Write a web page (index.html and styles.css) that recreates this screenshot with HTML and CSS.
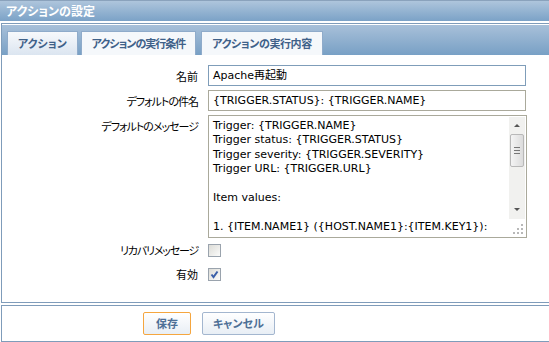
FILE: index.html
```html
<!DOCTYPE html>
<html>
<head>
<meta charset="utf-8">
<link rel="stylesheet" href="styles.css">
</head>
<body>
<div class="header">アクションの設定</div>
<div class="panel">
  <div class="tabbar">
    <div class="tab active">アクション</div>
    <div class="tab long">アクションの実行条件</div>
    <div class="tab long last">アクションの実行内容</div>
  </div>
  <div class="form">
    <div class="row">
      <div class="label">名前</div>
      <div class="input blue">Apache再起動</div>
    </div>
    <div class="row">
      <div class="label narrow">デフォルトの件名</div>
      <div class="input">{TRIGGER.STATUS}: {TRIGGER.NAME}</div>
    </div>
    <div class="row top">
      <div class="label narrow">デフォルトのメッセージ</div>
      <div class="textarea">
        <div class="ta-text">Trigger: {TRIGGER.NAME}<br>Trigger status: {TRIGGER.STATUS}<br>Trigger severity: {TRIGGER.SEVERITY}<br>Trigger URL: {TRIGGER.URL}<br><br>Item values:<br><br>1. {ITEM.NAME1} ({HOST.NAME1}:{ITEM.KEY1}):</div>
        <div class="scroll">
          <div class="arrow up"></div>
          <div class="track">
            <div class="thumb"><span></span><span></span><span></span></div>
          </div>
          <div class="arrow down"></div>
          <div class="grip">
            <svg width="11" height="11" viewBox="0 0 11 11"><g fill="#b8b8b8"><rect x="8" y="0" width="2" height="2"/><rect x="4" y="4" width="2" height="2"/><rect x="8" y="4" width="2" height="2"/><rect x="0" y="8" width="2" height="2"/><rect x="4" y="8" width="2" height="2"/><rect x="8" y="8" width="2" height="2"/></g></svg>
          </div>
        </div>
      </div>
    </div>
    <div class="row check-row first">
      <div class="label narrower">リカバリメッセージ</div>
      <div class="checkbox"></div>
    </div>
    <div class="row check-row">
      <div class="label">有効</div>
      <div class="checkbox checked">
        <svg width="9" height="9" viewBox="0 0 9 9"><path d="M1.5 4.5 L3.5 7 L7.5 1.5" fill="none" stroke="#3a5fa8" stroke-width="2"/></svg>
      </div>
    </div>
  </div>
</div>
<div class="footer">
  <div class="btn save">保存</div>
  <div class="btn cancel">キャンセル</div>
</div>
</body>
</html>
```
FILE: styles.css
```css
html, body {
  margin: 0;
  padding: 0;
  background: #ffffff;
}
body {
  width: 549px;
  height: 342px;
  overflow: hidden;
  font-family: "DejaVu Sans", "Noto Sans CJK JP", sans-serif;
  font-size: 11px;
  color: #000;
}
.header {
  height: 20px;
  border-top: 1px solid #8aa2bc;
  background: linear-gradient(#aec5dc, #7ba2c7);
  color: #fff;
  font-family: "Noto Sans CJK JP", sans-serif;
  font-feature-settings: "palt";
  font-weight: bold;
  font-size: 12px;
  line-height: 20px;
  padding-left: 6px;
}
.panel {
  margin-top: 2px;
  margin-left: 1px;
  border: 1px solid #7f9cba;
  border-right: none;
  height: 278px;
}
.tabbar {
  border-top: 1px solid #fff;
  height: 30px;
  background: linear-gradient(#a8c0d9, #78a0c5);
  display: flex;
  align-items: flex-end;
  padding-left: 5px;
  gap: 3px;
}
.tab {
  height: 23px;
  border: 1px solid #8fabca;
  border-bottom: none;
  background: #f5f8fb;
  color: #3f6189;
  font-family: "Noto Sans CJK JP", sans-serif;
  font-feature-settings: "palt";
  font-weight: bold;
  font-size: 11px;
  line-height: 23px;
  padding: 0 10px;
}
.tab.long {
  letter-spacing: -1px;
}
.tab.last {
  letter-spacing: -0.4px;
  margin-left: 2px;
}
.tab.active {
  background: linear-gradient(#f7f9fc, #dbe5f0);
}
.form {
  padding-top: 10px;
}
.row {
  display: flex;
  align-items: center;
  margin-bottom: 4px;
}
.row.top { align-items: flex-start; }
.label {
  width: 196px;
  text-align: right;
  padding-right: 10px;
  font-family: "Noto Sans CJK JP", sans-serif;
  font-feature-settings: "palt";
  font-size: 11px;
  white-space: nowrap;
}
.label.narrow { letter-spacing: -1px; }
.label.narrower { letter-spacing: -1.2px; }
.row.top .label { padding-top: 3px; }
.input {
  width: 312px;
  height: 19px;
  border: 1px solid #aaa99b;
  line-height: 19px;
  padding-left: 4px;
  font-size: 11px;
}
.input.blue { border-color: #7f9db9; }
.textarea {
  width: 317px;
  height: 121px;
  border: 1px solid #aaa99b;
  display: flex;
}
.ta-text {
  flex: 1;
  padding: 3px 0 0 4px;
  line-height: 14.4px;
  font-size: 11px;
  overflow: hidden;
  white-space: nowrap;
}
.scroll {
  width: 16px;
  display: flex;
  flex-direction: column;
  background: #f1f1ef;
  margin: 1px 1px 0 0;
}
.arrow {
  height: 16px;
  position: relative;
}
.arrow::after {
  content: "";
  position: absolute;
  left: 5px;
  border-left: 3px solid transparent;
  border-right: 3px solid transparent;
}
.arrow.up::after { top: 7px; border-bottom: 3px solid #555; }
.arrow.down::after { top: 5px; border-top: 3px solid #555; }
.track {
  flex: 1;
  padding-top: 1px;
}
.thumb {
  height: 31px;
  border: 1px solid #b8b8b8;
  border-radius: 2px;
  background: linear-gradient(90deg, #f4f4f4, #dcdcdc);
  margin: 0 1px;
  display: flex;
  flex-direction: column;
  justify-content: center;
  align-items: center;
  gap: 2px;
}
.thumb span {
  display: block;
  width: 6px;
  height: 1px;
  background: #777;
}
.grip {
  height: 16px;
  background: #fff;
  display: flex;
  justify-content: flex-end;
  align-items: flex-end;
  padding: 0 1px 2px 0;
}
.check-row { margin-bottom: 8px; }
.check-row.first { margin-top: 3px; }
.checkbox {
  width: 11px;
  height: 11px;
  border: 1px solid #9aa3ad;
  background: linear-gradient(135deg, #dcdcd7, #fbfbfa);
  display: flex;
  align-items: center;
  justify-content: center;
}
.footer {
  margin: 2px 0 0 1px;
  border: 1px solid #7f9cba;
  border-right: none;
  height: 35px;
  display: flex;
  align-items: center;
  gap: 11px;
  padding-left: 141px;
}
.btn {
  height: 21px;
  border: 1px solid #a3b6cf;
  border-radius: 2px;
  background: linear-gradient(#ffffff, #e8eef5);
  color: #4d6f96;
  font-family: "Noto Sans CJK JP", sans-serif;
  font-feature-settings: "palt";
  font-weight: bold;
  font-size: 11px;
  line-height: 21px;
  padding: 0 12px;
}
.btn.cancel { padding: 0 10px; }
.btn.save {
  border-color: #f5a63f;
}
```
